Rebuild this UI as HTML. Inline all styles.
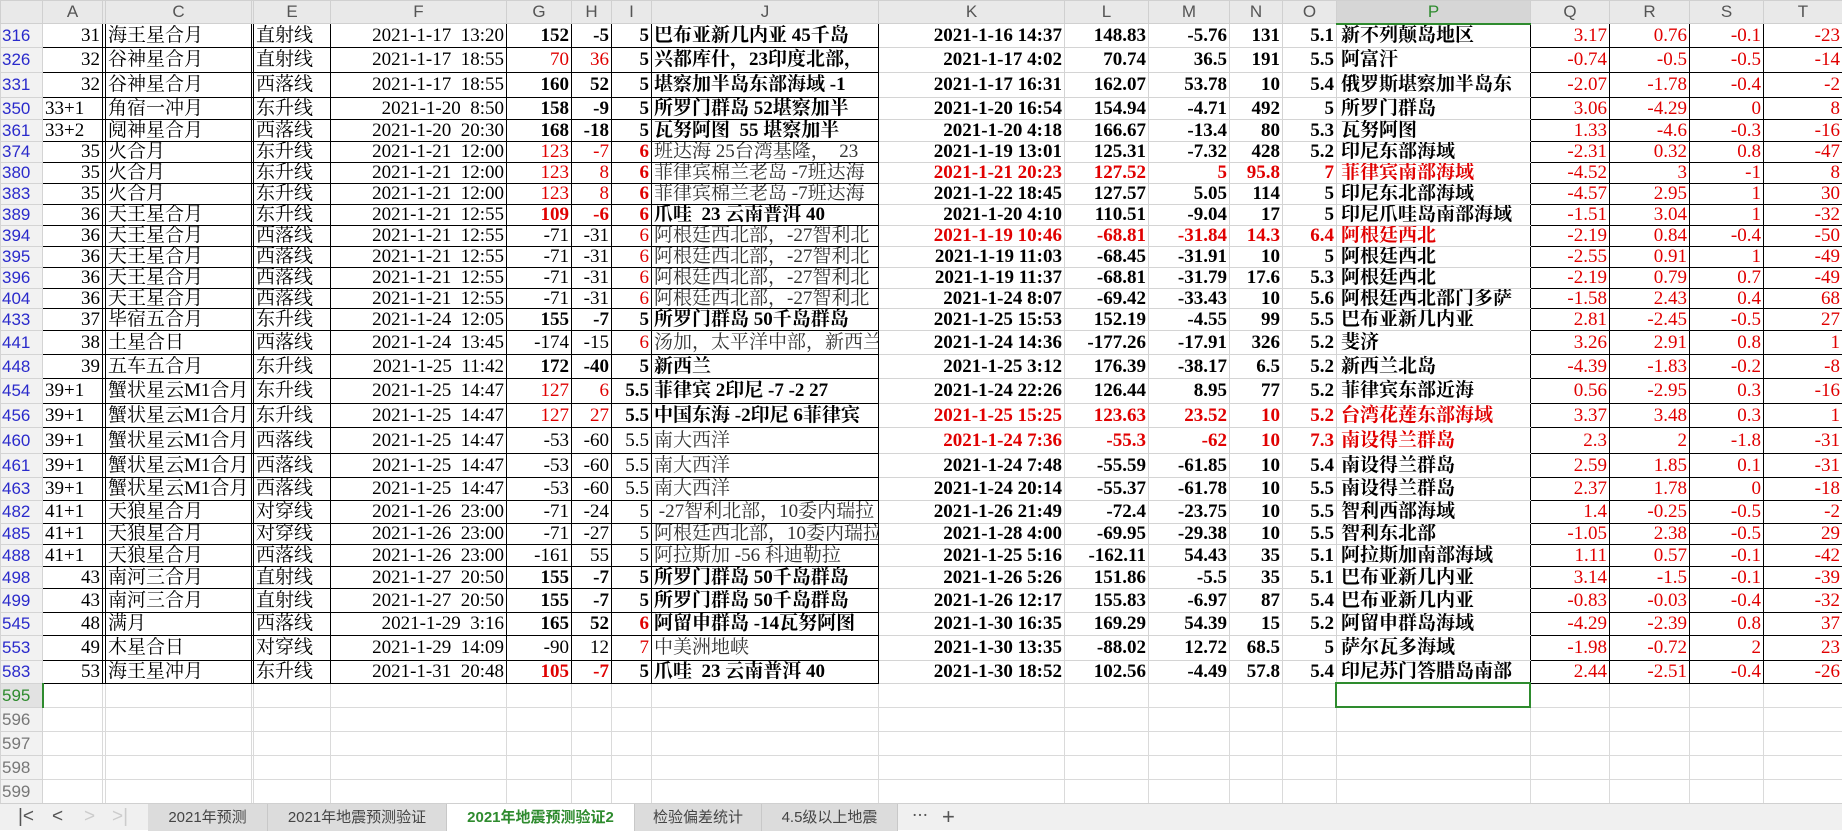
<!DOCTYPE html>
<html><head><meta charset="utf-8">
<style>
*{margin:0;padding:0;box-sizing:border-box}
body{width:1842px;height:830px;overflow:hidden;background:#fff;position:relative;font-family:"Liberation Serif","Noto Serif CJK SC",serif}
table{border-collapse:collapse;table-layout:fixed;width:1842px;position:absolute;left:0;top:0}
td{border:1px solid #000;text-align:right;font-size:19px;white-space:pre;overflow:hidden;padding:0 2px;line-height:18px;color:#000}
td.l{text-align:left}
td.b{font-weight:bold}
td.r{color:#e00000}
td.j{text-align:left;color:#333}
td.jb{text-align:left;font-weight:bold}
td.k{border-color:#d4d4d4;font-weight:bold}
td.kr{border-color:#d4d4d4;font-weight:bold;color:#e00000}
td.p{border-color:#d4d4d4;border-right-color:#000;text-align:left;font-weight:bold;padding-left:4px}
td.pr{border-color:#d4d4d4;border-right-color:#000;text-align:left;font-weight:bold;color:#e00000;padding-left:4px}
td.q{color:#e00000}
td.x{padding:0;border-top-color:#000;border-bottom-color:#000}
td.n{background:#f2f2f2;border-color:#d4d4d4;color:#2a2acb;text-align:left;font-family:"Liberation Sans",sans-serif;font-size:17px;padding-left:1px}
td.e{border-color:#dadada}
td.ng{background:#f2f2f2;border-color:#d4d4d4;color:#777;text-align:left;font-family:"Liberation Sans",sans-serif;font-size:17px;padding-left:1px}
tr.hd td{background:#e9e9e9;border-color:#d0d0d0;color:#555;text-align:center;font-family:"Liberation Sans",sans-serif;font-size:17px;font-weight:normal}
#tabs{position:absolute;left:0;top:803px;width:1842px;height:27px;background:#f0f0f0;border-top:1px solid #d0d0d0;font-family:"Liberation Sans","Noto Sans CJK SC",sans-serif;font-size:15px;color:#444}
.tab{position:absolute;top:0;height:27px;line-height:27px;text-align:center;background:#dcdcdc;border-right:1px solid #c8c8c8}
.tab.act{background:#fff;color:#2e8b2e;font-weight:bold}
.ic{position:absolute;top:0;line-height:26px;font-size:19px;color:#555}
</style></head><body>
<table>
<colgroup><col style="width:42px"><col style="width:60px"><col style="width:3px"><col style="width:146px"><col style="width:2px"><col style="width:77px"><col style="width:176px"><col style="width:65px"><col style="width:40px"><col style="width:40px"><col style="width:227px"><col style="width:186px"><col style="width:84px"><col style="width:81px"><col style="width:53px"><col style="width:54px"><col style="width:194px"><col style="width:79px"><col style="width:80px"><col style="width:74px"><col style="width:79px"></colgroup>
<tr class="hd" style="height:23px"><td></td><td>A</td><td style="padding:0"></td><td>C</td><td style="padding:0"></td><td>E</td><td>F</td><td>G</td><td>H</td><td>I</td><td>J</td><td>K</td><td>L</td><td>M</td><td>N</td><td>O</td><td style="background:#d6d6d6;color:#2e8b2e;border-bottom:2px solid #2e8b2e">P</td><td>Q</td><td>R</td><td>S</td><td>T</td></tr>

<tr style="height:24px"><td class=n>316</td><td>31</td><td class=x></td><td class=l>海王星合月</td><td class=x></td><td class=l>直射线</td><td>2021-1-17  13:20</td><td class=b>152</td><td class=b>-5</td><td class=b>5</td><td class=jb>巴布亚新几内亚 45千岛</td><td class=k>2021-1-16 14:37</td><td class=k>148.83</td><td class=k>-5.76</td><td class=k>131</td><td class=k>5.1</td><td class=p>新不列颠岛地区</td><td class=q>3.17</td><td class=q>0.76</td><td class=q>-0.1</td><td class=q>-23</td></tr>
<tr style="height:25px"><td class=n>326</td><td>32</td><td class=x></td><td class=l>谷神星合月</td><td class=x></td><td class=l>直射线</td><td>2021-1-17  18:55</td><td class=r>70</td><td class=r>36</td><td class=b>5</td><td class=jb>兴都库什，23印度北部，</td><td class=k>2021-1-17 4:02</td><td class=k>70.74</td><td class=k>36.5</td><td class=k>191</td><td class=k>5.5</td><td class=p>阿富汗</td><td class=q>-0.74</td><td class=q>-0.5</td><td class=q>-0.5</td><td class=q>-14</td></tr>
<tr style="height:25px"><td class=n>331</td><td>32</td><td class=x></td><td class=l>谷神星合月</td><td class=x></td><td class=l>西落线</td><td>2021-1-17  18:55</td><td class=b>160</td><td class=b>52</td><td class=b>5</td><td class=jb>堪察加半岛东部海域 -1</td><td class=k>2021-1-17 16:31</td><td class=k>162.07</td><td class=k>53.78</td><td class=k>10</td><td class=k>5.4</td><td class=p>俄罗斯堪察加半岛东</td><td class=q>-2.07</td><td class=q>-1.78</td><td class=q>-0.4</td><td class=q>-2</td></tr>
<tr style="height:22px"><td class=n>350</td><td class=l>33+1</td><td class=x></td><td class=l>角宿一冲月</td><td class=x></td><td class=l>东升线</td><td>2021-1-20  8:50</td><td class=b>158</td><td class=b>-9</td><td class=b>5</td><td class=jb>所罗门群岛 52堪察加半</td><td class=k>2021-1-20 16:54</td><td class=k>154.94</td><td class=k>-4.71</td><td class=k>492</td><td class=k>5</td><td class=p>所罗门群岛</td><td class=q>3.06</td><td class=q>-4.29</td><td class=q>0</td><td class=q>8</td></tr>
<tr style="height:22px"><td class=n>361</td><td class=l>33+2</td><td class=x></td><td class=l>阋神星合月</td><td class=x></td><td class=l>西落线</td><td>2021-1-20  20:30</td><td class=b>168</td><td class=b>-18</td><td class=b>5</td><td class=jb>瓦努阿图  55 堪察加半</td><td class=k>2021-1-20 4:18</td><td class=k>166.67</td><td class=k>-13.4</td><td class=k>80</td><td class=k>5.3</td><td class=p>瓦努阿图</td><td class=q>1.33</td><td class=q>-4.6</td><td class=q>-0.3</td><td class=q>-16</td></tr>
<tr style="height:21px"><td class=n>374</td><td>35</td><td class=x></td><td class=l>火合月</td><td class=x></td><td class=l>东升线</td><td>2021-1-21  12:00</td><td class=r>123</td><td class=r>-7</td><td class="r b">6</td><td class=j>班达海 25台湾基隆，  23</td><td class=k>2021-1-19 13:01</td><td class=k>125.31</td><td class=k>-7.32</td><td class=k>428</td><td class=k>5.2</td><td class=p>印尼东部海域</td><td class=q>-2.31</td><td class=q>0.32</td><td class=q>0.8</td><td class=q>-47</td></tr>
<tr style="height:21px"><td class=n>380</td><td>35</td><td class=x></td><td class=l>火合月</td><td class=x></td><td class=l>东升线</td><td>2021-1-21  12:00</td><td class=r>123</td><td class=r>8</td><td class="r b">6</td><td class=j>菲律宾棉兰老岛 -7班达海</td><td class=kr>2021-1-21 20:23</td><td class=kr>127.52</td><td class=kr>5</td><td class=kr>95.8</td><td class=kr>7</td><td class=pr>菲律宾南部海域</td><td class=q>-4.52</td><td class=q>3</td><td class=q>-1</td><td class=q>8</td></tr>
<tr style="height:21px"><td class=n>383</td><td>35</td><td class=x></td><td class=l>火合月</td><td class=x></td><td class=l>东升线</td><td>2021-1-21  12:00</td><td class=r>123</td><td class=r>8</td><td class="r b">6</td><td class=j>菲律宾棉兰老岛 -7班达海</td><td class=k>2021-1-22 18:45</td><td class=k>127.57</td><td class=k>5.05</td><td class=k>114</td><td class=k>5</td><td class=p>印尼东北部海域</td><td class=q>-4.57</td><td class=q>2.95</td><td class=q>1</td><td class=q>30</td></tr>
<tr style="height:21px"><td class=n>389</td><td>36</td><td class=x></td><td class=l>天王星合月</td><td class=x></td><td class=l>东升线</td><td>2021-1-21  12:55</td><td class="r b">109</td><td class="r b">-6</td><td class="r b">6</td><td class=jb>爪哇  23 云南普洱 40</td><td class=k>2021-1-20 4:10</td><td class=k>110.51</td><td class=k>-9.04</td><td class=k>17</td><td class=k>5</td><td class=p>印尼爪哇岛南部海域</td><td class=q>-1.51</td><td class=q>3.04</td><td class=q>1</td><td class=q>-32</td></tr>
<tr style="height:21px"><td class=n>394</td><td>36</td><td class=x></td><td class=l>天王星合月</td><td class=x></td><td class=l>西落线</td><td>2021-1-21  12:55</td><td>-71</td><td>-31</td><td class=r>6</td><td class=j>阿根廷西北部，-27智利北</td><td class=kr>2021-1-19 10:46</td><td class=kr>-68.81</td><td class=kr>-31.84</td><td class=kr>14.3</td><td class=kr>6.4</td><td class=pr>阿根廷西北</td><td class=q>-2.19</td><td class=q>0.84</td><td class=q>-0.4</td><td class=q>-50</td></tr>
<tr style="height:21px"><td class=n>395</td><td>36</td><td class=x></td><td class=l>天王星合月</td><td class=x></td><td class=l>西落线</td><td>2021-1-21  12:55</td><td>-71</td><td>-31</td><td class=r>6</td><td class=j>阿根廷西北部，-27智利北</td><td class=k>2021-1-19 11:03</td><td class=k>-68.45</td><td class=k>-31.91</td><td class=k>10</td><td class=k>5</td><td class=p>阿根廷西北</td><td class=q>-2.55</td><td class=q>0.91</td><td class=q>1</td><td class=q>-49</td></tr>
<tr style="height:21px"><td class=n>396</td><td>36</td><td class=x></td><td class=l>天王星合月</td><td class=x></td><td class=l>西落线</td><td>2021-1-21  12:55</td><td>-71</td><td>-31</td><td class=r>6</td><td class=j>阿根廷西北部，-27智利北</td><td class=k>2021-1-19 11:37</td><td class=k>-68.81</td><td class=k>-31.79</td><td class=k>17.6</td><td class=k>5.3</td><td class=p>阿根廷西北</td><td class=q>-2.19</td><td class=q>0.79</td><td class=q>0.7</td><td class=q>-49</td></tr>
<tr style="height:20px"><td class=n>404</td><td>36</td><td class=x></td><td class=l>天王星合月</td><td class=x></td><td class=l>西落线</td><td>2021-1-21  12:55</td><td>-71</td><td>-31</td><td class=r>6</td><td class=j>阿根廷西北部，-27智利北</td><td class=k>2021-1-24 8:07</td><td class=k>-69.42</td><td class=k>-33.43</td><td class=k>10</td><td class=k>5.6</td><td class=p>阿根廷西北部门多萨</td><td class=q>-1.58</td><td class=q>2.43</td><td class=q>0.4</td><td class=q>68</td></tr>
<tr style="height:22px"><td class=n>433</td><td>37</td><td class=x></td><td class=l>毕宿五合月</td><td class=x></td><td class=l>东升线</td><td>2021-1-24  12:05</td><td class=b>155</td><td class=b>-7</td><td class=b>5</td><td class=jb>所罗门群岛 50千岛群岛</td><td class=k>2021-1-25 15:53</td><td class=k>152.19</td><td class=k>-4.55</td><td class=k>99</td><td class=k>5.5</td><td class=p>巴布亚新几内亚</td><td class=q>2.81</td><td class=q>-2.45</td><td class=q>-0.5</td><td class=q>27</td></tr>
<tr style="height:24px"><td class=n>441</td><td>38</td><td class=x></td><td class=l>土星合日</td><td class=x></td><td class=l>西落线</td><td>2021-1-24  13:45</td><td>-174</td><td>-15</td><td class=r>6</td><td class=j>汤加，太平洋中部，新西兰</td><td class=k>2021-1-24 14:36</td><td class=k>-177.26</td><td class=k>-17.91</td><td class=k>326</td><td class=k>5.2</td><td class=p>斐济</td><td class=q>3.26</td><td class=q>2.91</td><td class=q>0.8</td><td class=q>1</td></tr>
<tr style="height:24px"><td class=n>448</td><td>39</td><td class=x></td><td class=l>五车五合月</td><td class=x></td><td class=l>东升线</td><td>2021-1-25  11:42</td><td class=b>172</td><td class=b>-40</td><td class=b>5</td><td class=jb>新西兰</td><td class=k>2021-1-25 3:12</td><td class=k>176.39</td><td class=k>-38.17</td><td class=k>6.5</td><td class=k>5.2</td><td class=p>新西兰北岛</td><td class=q>-4.39</td><td class=q>-1.83</td><td class=q>-0.2</td><td class=q>-8</td></tr>
<tr style="height:25px"><td class=n>454</td><td class=l>39+1</td><td class=x></td><td class=l>蟹状星云M1合月</td><td class=x></td><td class=l>东升线</td><td>2021-1-25  14:47</td><td class=r>127</td><td class=r>6</td><td class=b>5.5</td><td class=jb>菲律宾 2印尼 -7 -2 27</td><td class=k>2021-1-24 22:26</td><td class=k>126.44</td><td class=k>8.95</td><td class=k>77</td><td class=k>5.2</td><td class=p>菲律宾东部近海</td><td class=q>0.56</td><td class=q>-2.95</td><td class=q>0.3</td><td class=q>-16</td></tr>
<tr style="height:24px"><td class=n>456</td><td class=l>39+1</td><td class=x></td><td class=l>蟹状星云M1合月</td><td class=x></td><td class=l>东升线</td><td>2021-1-25  14:47</td><td class=r>127</td><td class=r>27</td><td class=b>5.5</td><td class=jb>中国东海 -2印尼 6菲律宾</td><td class=kr>2021-1-25 15:25</td><td class=kr>123.63</td><td class=kr>23.52</td><td class=kr>10</td><td class=kr>5.2</td><td class=pr>台湾花莲东部海域</td><td class=q>3.37</td><td class=q>3.48</td><td class=q>0.3</td><td class=q>1</td></tr>
<tr style="height:26px"><td class=n>460</td><td class=l>39+1</td><td class=x></td><td class=l>蟹状星云M1合月</td><td class=x></td><td class=l>西落线</td><td>2021-1-25  14:47</td><td>-53</td><td>-60</td><td>5.5</td><td class=j>南大西洋</td><td class=kr>2021-1-24 7:36</td><td class=kr>-55.3</td><td class=kr>-62</td><td class=kr>10</td><td class=kr>7.3</td><td class=pr>南设得兰群岛</td><td class=q>2.3</td><td class=q>2</td><td class=q>-1.8</td><td class=q>-31</td></tr>
<tr style="height:24px"><td class=n>461</td><td class=l>39+1</td><td class=x></td><td class=l>蟹状星云M1合月</td><td class=x></td><td class=l>西落线</td><td>2021-1-25  14:47</td><td>-53</td><td>-60</td><td>5.5</td><td class=j>南大西洋</td><td class=k>2021-1-24 7:48</td><td class=k>-55.59</td><td class=k>-61.85</td><td class=k>10</td><td class=k>5.4</td><td class=p>南设得兰群岛</td><td class=q>2.59</td><td class=q>1.85</td><td class=q>0.1</td><td class=q>-31</td></tr>
<tr style="height:23px"><td class=n>463</td><td class=l>39+1</td><td class=x></td><td class=l>蟹状星云M1合月</td><td class=x></td><td class=l>西落线</td><td>2021-1-25  14:47</td><td>-53</td><td>-60</td><td>5.5</td><td class=j>南大西洋</td><td class=k>2021-1-24 20:14</td><td class=k>-55.37</td><td class=k>-61.78</td><td class=k>10</td><td class=k>5.5</td><td class=p>南设得兰群岛</td><td class=q>2.37</td><td class=q>1.78</td><td class=q>0</td><td class=q>-18</td></tr>
<tr style="height:23px"><td class=n>482</td><td class=l>41+1</td><td class=x></td><td class=l>天狼星合月</td><td class=x></td><td class=l>对穿线</td><td>2021-1-26  23:00</td><td>-71</td><td>-24</td><td>5</td><td class=j> -27智利北部，10委内瑞拉</td><td class=k>2021-1-26 21:49</td><td class=k>-72.4</td><td class=k>-23.75</td><td class=k>10</td><td class=k>5.5</td><td class=p>智利西部海域</td><td class=q>1.4</td><td class=q>-0.25</td><td class=q>-0.5</td><td class=q>-2</td></tr>
<tr style="height:21px"><td class=n>485</td><td class=l>41+1</td><td class=x></td><td class=l>天狼星合月</td><td class=x></td><td class=l>对穿线</td><td>2021-1-26  23:00</td><td>-71</td><td>-27</td><td>5</td><td class=j>阿根廷西北部，10委内瑞拉</td><td class=k>2021-1-28 4:00</td><td class=k>-69.95</td><td class=k>-29.38</td><td class=k>10</td><td class=k>5.5</td><td class=p>智利东北部</td><td class=q>-1.05</td><td class=q>2.38</td><td class=q>-0.5</td><td class=q>29</td></tr>
<tr style="height:22px"><td class=n>488</td><td class=l>41+1</td><td class=x></td><td class=l>天狼星合月</td><td class=x></td><td class=l>西落线</td><td>2021-1-26  23:00</td><td>-161</td><td>55</td><td>5</td><td class=j>阿拉斯加 -56 科迪勒拉</td><td class=k>2021-1-25 5:16</td><td class=k>-162.11</td><td class=k>54.43</td><td class=k>35</td><td class=k>5.1</td><td class=p>阿拉斯加南部海域</td><td class=q>1.11</td><td class=q>0.57</td><td class=q>-0.1</td><td class=q>-42</td></tr>
<tr style="height:22px"><td class=n>498</td><td>43</td><td class=x></td><td class=l>南河三合月</td><td class=x></td><td class=l>直射线</td><td>2021-1-27  20:50</td><td class=b>155</td><td class=b>-7</td><td class=b>5</td><td class=jb>所罗门群岛 50千岛群岛</td><td class=k>2021-1-26 5:26</td><td class=k>151.86</td><td class=k>-5.5</td><td class=k>35</td><td class=k>5.1</td><td class=p>巴布亚新几内亚</td><td class=q>3.14</td><td class=q>-1.5</td><td class=q>-0.1</td><td class=q>-39</td></tr>
<tr style="height:24px"><td class=n>499</td><td>43</td><td class=x></td><td class=l>南河三合月</td><td class=x></td><td class=l>直射线</td><td>2021-1-27  20:50</td><td class=b>155</td><td class=b>-7</td><td class=b>5</td><td class=jb>所罗门群岛 50千岛群岛</td><td class=k>2021-1-26 12:17</td><td class=k>155.83</td><td class=k>-6.97</td><td class=k>87</td><td class=k>5.4</td><td class=p>巴布亚新几内亚</td><td class=q>-0.83</td><td class=q>-0.03</td><td class=q>-0.4</td><td class=q>-32</td></tr>
<tr style="height:23px"><td class=n>545</td><td>48</td><td class=x></td><td class=l>满月</td><td class=x></td><td class=l>西落线</td><td>2021-1-29  3:16</td><td class=b>165</td><td class=b>52</td><td class="r b">6</td><td class=jb>阿留申群岛 -14瓦努阿图</td><td class=k>2021-1-30 16:35</td><td class=k>169.29</td><td class=k>54.39</td><td class=k>15</td><td class=k>5.2</td><td class=p>阿留申群岛海域</td><td class=q>-4.29</td><td class=q>-2.39</td><td class=q>0.8</td><td class=q>37</td></tr>
<tr style="height:25px"><td class=n>553</td><td>49</td><td class=x></td><td class=l>木星合日</td><td class=x></td><td class=l>对穿线</td><td>2021-1-29  14:09</td><td>-90</td><td>12</td><td class=r>7</td><td class=j>中美洲地峡</td><td class=k>2021-1-30 13:35</td><td class=k>-88.02</td><td class=k>12.72</td><td class=k>68.5</td><td class=k>5</td><td class=p>萨尔瓦多海域</td><td class=q>-1.98</td><td class=q>-0.72</td><td class=q>2</td><td class=q>23</td></tr>
<tr style="height:23px"><td class=n>583</td><td>53</td><td class=x></td><td class=l>海王星冲月</td><td class=x></td><td class=l>东升线</td><td>2021-1-31  20:48</td><td class="r b">105</td><td class="r b">-7</td><td class=b>5</td><td class=jb>爪哇  23 云南普洱 40</td><td class=k>2021-1-30 18:52</td><td class=k>102.56</td><td class=k>-4.49</td><td class=k>57.8</td><td class=k>5.4</td><td class=p>印尼苏门答腊岛南部</td><td class=q>2.44</td><td class=q>-2.51</td><td class=q>-0.4</td><td class=q>-26</td></tr>

<tr style="height:24px"><td class=ng style="color:#2e8b2e;border-right:2px solid #2e8b2e;background:#e2e2e2">595</td><td class=e></td><td class=e></td><td class=e></td><td class=e></td><td class=e></td><td class=e></td><td class=e></td><td class=e></td><td class=e></td><td class=e></td><td class=e></td><td class=e></td><td class=e></td><td class=e></td><td class=e></td><td class=e></td><td class=e></td><td class=e></td><td class=e></td><td class=e></td></tr>
<tr style="height:24px"><td class=ng>596</td><td class=e></td><td class=e></td><td class=e></td><td class=e></td><td class=e></td><td class=e></td><td class=e></td><td class=e></td><td class=e></td><td class=e></td><td class=e></td><td class=e></td><td class=e></td><td class=e></td><td class=e></td><td class=e></td><td class=e></td><td class=e></td><td class=e></td><td class=e></td></tr>
<tr style="height:24px"><td class=ng>597</td><td class=e></td><td class=e></td><td class=e></td><td class=e></td><td class=e></td><td class=e></td><td class=e></td><td class=e></td><td class=e></td><td class=e></td><td class=e></td><td class=e></td><td class=e></td><td class=e></td><td class=e></td><td class=e></td><td class=e></td><td class=e></td><td class=e></td><td class=e></td></tr>
<tr style="height:24px"><td class=ng>598</td><td class=e></td><td class=e></td><td class=e></td><td class=e></td><td class=e></td><td class=e></td><td class=e></td><td class=e></td><td class=e></td><td class=e></td><td class=e></td><td class=e></td><td class=e></td><td class=e></td><td class=e></td><td class=e></td><td class=e></td><td class=e></td><td class=e></td><td class=e></td></tr>
<tr style="height:24px"><td class=ng>599</td><td class=e></td><td class=e></td><td class=e></td><td class=e></td><td class=e></td><td class=e></td><td class=e></td><td class=e></td><td class=e></td><td class=e></td><td class=e></td><td class=e></td><td class=e></td><td class=e></td><td class=e></td><td class=e></td><td class=e></td><td class=e></td><td class=e></td><td class=e></td></tr>
</table>

<div style="position:absolute;left:1335px;top:682px;width:196px;height:26px;border:2px solid #2e8b2e"></div>

<div id="tabs">
  <div class="ic" style="left:18px">|&lt;</div>
  <div class="ic" style="left:52px">&lt;</div>
  <div class="ic" style="left:84px;color:#ccc">&gt;</div>
  <div class="ic" style="left:112px;color:#ccc">&gt;|</div>
  <div class="tab" style="left:148px;width:120px">2021年预测</div>
  <div class="tab" style="left:268px;width:179px">2021年地震预测验证</div>
  <div class="tab act" style="left:447px;width:188px">2021年地震预测验证2</div>
  <div class="tab" style="left:635px;width:127px">检验偏差统计</div>
  <div class="tab" style="left:762px;width:136px">4.5级以上地震</div>
  <div class="ic" style="left:912px;font-size:16px">⋯</div>
  <div class="ic" style="left:942px;font-size:22px">+</div>
</div>
</body></html>
